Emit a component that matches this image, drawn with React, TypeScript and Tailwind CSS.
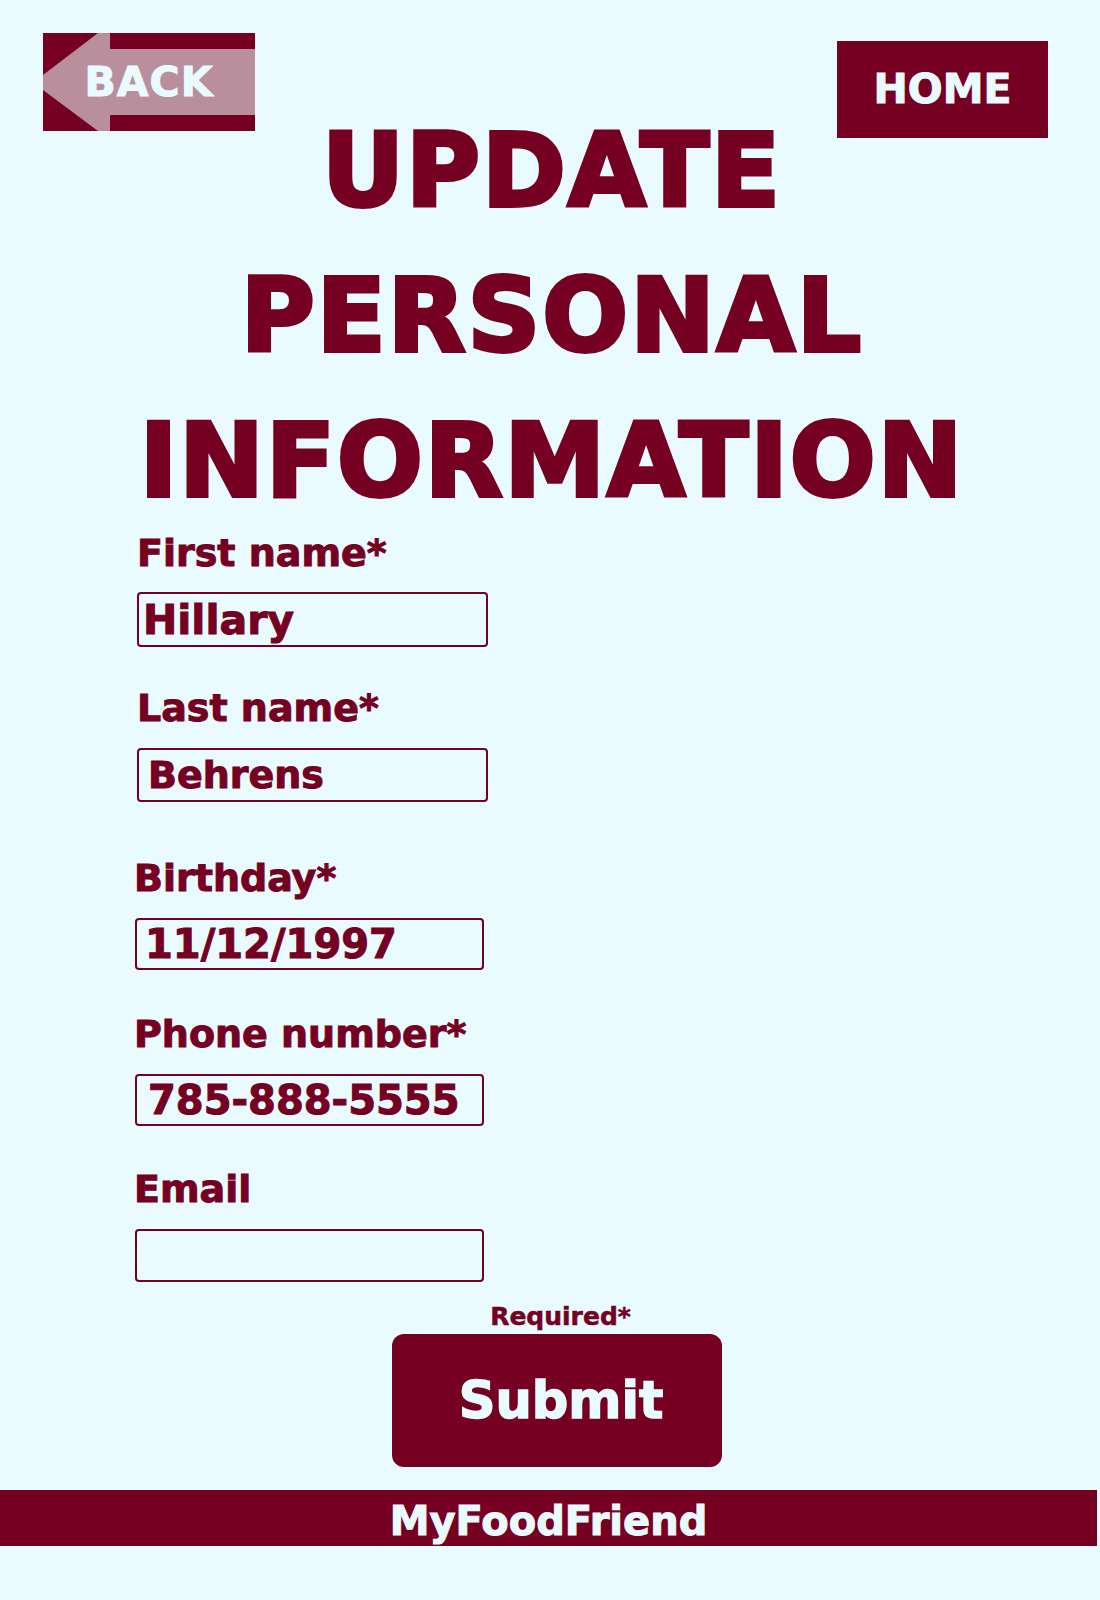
const fields = [
  { label: "First name*", value: "Hillary", lab: "ml-[137px]", box: "ml-[137px] w-[351px] h-[55px] pl-[4px] text-[41px]", gap: "mt-[-3px]", boxGap: "mt-[17px]" },
  { label: "Last name*", value: "Behrens", lab: "ml-[137px]", box: "ml-[137px] w-[351px] h-[54px] pl-[9px] text-[38px]", gap: "mt-[39px]", boxGap: "mt-[18px]" },
  { label: "Birthday*", value: "11/12/1997", lab: "ml-[134px]", box: "ml-[135px] w-[349px] h-[52px] pl-[8px] text-[40px]", gap: "mt-[54px]", boxGap: "mt-[18px]" },
  { label: "Phone number*", value: "785-888-5555", lab: "ml-[134px]", box: "ml-[135px] w-[349px] h-[52px] pl-[11px] text-[40px]", gap: "mt-[42px]", boxGap: "mt-[18px]" },
  { label: "Email", value: "", lab: "ml-[134px]", box: "ml-[135px] w-[349px] h-[53px] pl-[8px] text-[40px]", gap: "mt-[41px]", boxGap: "mt-[18px]" },
];

const BackButton = () => {
  return (
    <button className="relative w-[212px] h-[98px] bg-[#750022] flex items-center justify-center">
      <svg className="absolute inset-0" width="212" height="98" viewBox="0 0 212 98">
        <polygon
          points="0,42 55,0 67,0 67,16 212,16 212,82 67,82 67,98 55,98 0,57"
          fill="#b98f9e"
        />
      </svg>
      <span className="relative text-[41px] leading-none tracking-[1px] text-[#e9fbff] [-webkit-text-stroke:1px_#e9fbff]">BACK</span>
    </button>
  );
};

export default function App() {
  return (
    <div className="min-h-[1600px] w-[1100px] bg-[#e9fbff] text-[#750022] font-['DejaVu_Sans',sans-serif] font-bold">
      {/* header buttons */}
      <div className="flex justify-between items-start pt-[33px] pl-[43px] pr-[52px]">
        <BackButton />
        <button className="mt-[8px] w-[211px] h-[97px] bg-[#750022] flex items-center justify-center text-[41px] leading-none text-[#e9fbff] [-webkit-text-stroke:1px_#e9fbff]">
          HOME
        </button>
      </div>

      <h1 className="-mt-[39px] pl-[4px] text-center text-[101px] leading-[145px] tracking-[2px] [-webkit-text-stroke:4px_#750022]">
        UPDATE
        <br />
        PERSONAL
        <br />
        INFORMATION
      </h1>

      <form className="flex flex-col">
        {fields.map((f) => (
          <div key={f.label} className={`flex flex-col ${f.gap}`}>
            <label className={`${f.lab} text-[38px] leading-[44px] [-webkit-text-stroke:1px_#750022]`}>{f.label}</label>
            <input
              readOnly
              value={f.value}
              className={`${f.box} ${f.boxGap} border-2 border-[#750022] rounded-[4px] bg-transparent leading-none font-bold text-[#750022] outline-none [-webkit-text-stroke:1px_#750022]`}
            />
          </div>
        ))}

        <div className="flex flex-col items-center pl-[21px] mt-[20px]">
          <span className="text-[25px] leading-[30px] [-webkit-text-stroke:0.5px_#750022]">Required*</span>
        </div>
        <div className="flex justify-start mt-[2px] pl-[392px]">
          <button
            type="button"
            className="w-[330px] h-[133px] rounded-[12px] bg-[#750022] text-[#e9fbff] text-[51px] leading-none pl-[8px] [-webkit-text-stroke:1.5px_#e9fbff]"
          >
            Submit
          </button>
        </div>
      </form>

      <footer className="mt-[23px] w-[1097px] h-[56px] bg-[#750022] flex items-center justify-center pt-[6px]">
        <span className="text-[40px] leading-none text-[#e9fbff] [-webkit-text-stroke:1px_#e9fbff]">MyFoodFriend</span>
      </footer>
    </div>
  );
}
